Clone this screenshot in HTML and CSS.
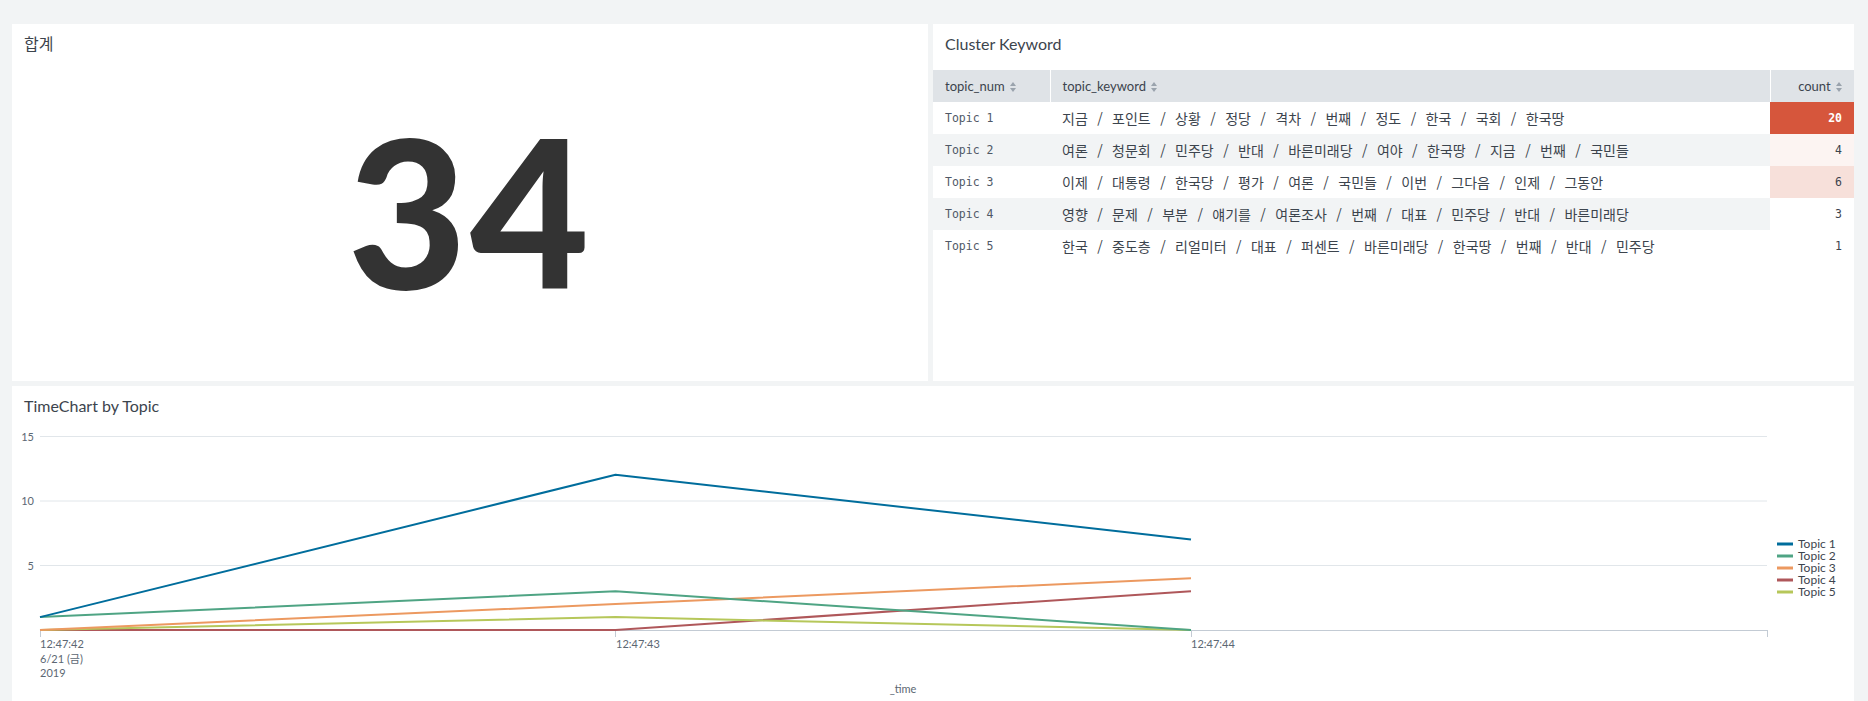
FILE: index.html
```html
<!DOCTYPE html>
<html lang="ko">
<head>
<meta charset="utf-8">
<title>Dashboard</title>
<link rel="stylesheet" href="styles.css">
</head>
<body>
<div class="dashboard">
  <div class="row row-top">
    <section class="panel">
      <h2 class="panel-title">합계</h2>
      <div class="single-value"><span class="sv-number">34</span></div>
    </section>
    <section class="panel">
      <h2 class="panel-title">Cluster Keyword</h2>
      <table class="tbl">
        <colgroup><col class="c-num"><col class="c-kw"><col class="c-count"></colgroup>
        <thead>
          <tr>
            <th>topic_num <svg class="sort" viewBox="0 0 6 10" width="6" height="10"><path d="M3 0 L6 4 L0 4 Z M0 6 L6 6 L3 10 Z"/></svg></th>
            <th>topic_keyword <svg class="sort" viewBox="0 0 6 10" width="6" height="10"><path d="M3 0 L6 4 L0 4 Z M0 6 L6 6 L3 10 Z"/></svg></th>
            <th class="num">count <svg class="sort" viewBox="0 0 6 10" width="6" height="10"><path d="M3 0 L6 4 L0 4 Z M0 6 L6 6 L3 10 Z"/></svg></th>
          </tr>
        </thead>
        <tbody>
          <tr>
            <td class="topic">Topic 1</td>
            <td class="kw">지금 / 포인트 / 상황 / 정당 / 격차 / 번째 / 정도 / 한국 / 국회 / 한국땅</td>
            <td class="num heat-20">20</td>
          </tr>
          <tr class="odd">
            <td class="topic">Topic 2</td>
            <td class="kw">여론 / 청문회 / 민주당 / 반대 / 바른미래당 / 여야 / 한국땅 / 지금 / 번째 / 국민들</td>
            <td class="num heat-4">4</td>
          </tr>
          <tr>
            <td class="topic">Topic 3</td>
            <td class="kw">이제 / 대통령 / 한국당 / 평가 / 여론 / 국민들 / 이번 / 그다음 / 인제 / 그동안</td>
            <td class="num heat-6">6</td>
          </tr>
          <tr class="odd">
            <td class="topic">Topic 4</td>
            <td class="kw">영향 / 문제 / 부분 / 얘기를 / 여론조사 / 번째 / 대표 / 민주당 / 반대 / 바른미래당</td>
            <td class="num heat-3">3</td>
          </tr>
          <tr>
            <td class="topic">Topic 5</td>
            <td class="kw">한국 / 중도층 / 리얼미터 / 대표 / 퍼센트 / 바른미래당 / 한국땅 / 번째 / 반대 / 민주당</td>
            <td class="num heat-1">1</td>
          </tr>
        </tbody>
      </table>
    </section>
  </div>
  <div class="row row-bottom">
    <section class="panel panel-chart">
      <h2 class="panel-title title-chart">TimeChart by Topic</h2>
      <svg class="chart" width="1842" height="290" viewBox="0 0 1842 290">
        <g transform="translate(0,10)">
          <g class="grid">
            <line x1="28" y1="4.5" x2="1755" y2="4.5"/>
            <line x1="28" y1="69" x2="1755" y2="69"/>
            <line x1="28" y1="133.5" x2="1755" y2="133.5"/>
          </g>
          <g class="ylab">
            <text x="22" y="8.5">15</text>
            <text x="22" y="73">10</text>
            <text x="22" y="137.5">5</text>
          </g>
          <g class="axis">
            <line x1="28" y1="198.5" x2="1755" y2="198.5"/>
            <line x1="28.5" y1="198" x2="28.5" y2="205"/>
            <line x1="603.5" y1="198" x2="603.5" y2="205"/>
            <line x1="1179.5" y1="198" x2="1179.5" y2="205"/>
            <line x1="1755.5" y1="198" x2="1755.5" y2="205"/>
          </g>
          <g class="xlab">
            <text x="28" y="216">12:47:42</text>
            <text x="28" y="231">6/21 (금)</text>
            <text x="28" y="245">2019</text>
            <text x="604" y="216">12:47:43</text>
            <text x="1179" y="216">12:47:44</text>
            <text class="xtitle" x="891" y="261">_time</text>
          </g>
          <g class="series" fill="none" stroke-width="2" stroke-linejoin="round">
            <polyline stroke="#af575a" points="28,198 603.5,198 1179,159.2"/>
            <polyline stroke="#b6c75a" points="28,198 603.5,185.1 1179,198"/>
            <polyline stroke="#ec9960" points="28,198 603.5,172.1 1179,146.3"/>
            <polyline stroke="#4fa484" points="28,185.1 603.5,159.2 1179,198"/>
            <polyline stroke="#006d9c" points="28,185.1 603.5,42.8 1179,107.5"/>
          </g>
          <g class="legend">
            <line x1="1765" y1="112" x2="1781" y2="112" stroke="#006d9c"/>
            <text x="1786" y="116">Topic 1</text>
            <line x1="1765" y1="124" x2="1781" y2="124" stroke="#4fa484"/>
            <text x="1786" y="128">Topic 2</text>
            <line x1="1765" y1="136" x2="1781" y2="136" stroke="#ec9960"/>
            <text x="1786" y="140">Topic 3</text>
            <line x1="1765" y1="148" x2="1781" y2="148" stroke="#af575a"/>
            <text x="1786" y="152">Topic 4</text>
            <line x1="1765" y1="160" x2="1781" y2="160" stroke="#b6c75a"/>
            <text x="1786" y="164">Topic 5</text>
          </g>
        </g>
      </svg>
    </section>
  </div>
</div>
</body>
</html>
```
FILE: styles.css
```css
html, body {
  margin: 0;
  padding: 0;
  background: #f2f4f5;
  overflow: hidden;
}
body {
  font-family: Lato, "Noto Sans CJK KR", sans-serif;
  color: #3c444d;
}
.dashboard {
  padding: 24px 14px 0 12px;
}
.row-top {
  display: grid;
  grid-template-columns: 916px 921px;
  gap: 5px;
  height: 357px;
}
.row-bottom {
  margin-top: 5px;
}
.panel {
  background: #fff;
  display: flex;
  flex-direction: column;
  min-width: 0;
}
.panel-chart {
  height: 330px;
  overflow: hidden;
}
.panel-title {
  margin: 0;
  padding: 10px 12px 16px;
  font-size: 16px;
  line-height: 20px;
  font-weight: 400;
  color: #3c444d;
}
.title-chart {
  padding-bottom: 6px;
}
.single-value {
  flex: 1;
  display: flex;
  align-items: center;
  justify-content: center;
  padding-bottom: 32px;
}
.sv-number {
  font-family: Lato, sans-serif;
  font-weight: 900;
  font-size: 206px;
  line-height: 1;
  letter-spacing: 3px;
  color: #333;
}
.tbl {
  width: 100%;
  border-collapse: collapse;
  table-layout: fixed;
  font-size: 13px;
}
.c-num { width: 117px; }
.c-count { width: 84px; }
.tbl th {
  background: #dfe3e7;
  height: 32px;
  padding: 0 12px;
  text-align: left;
  font-weight: 400;
  font-size: 13px;
  color: #3c444d;
  border-left: 1px solid #fff;
  white-space: nowrap;
}
.tbl th:first-child { border-left: none; }
.tbl th.num { text-align: right; }
.sort {
  fill: #9aa3ad;
  vertical-align: -1px;
  margin-left: 2px;
}
.tbl td {
  height: 32px;
  padding: 0 12px;
  white-space: nowrap;
  overflow: hidden;
}
.tbl tr.odd td { background: #f2f4f5; }
.topic {
  font-family: "DejaVu Sans Mono", monospace;
  font-size: 11.5px;
  color: #4f5866;
}
.kw {
  font-family: "Noto Sans CJK KR", sans-serif;
  font-size: 14px;
  word-spacing: 5.5px;
  color: #3c444d;
}
.tbl td.num {
  text-align: right;
  font-family: "DejaVu Sans Mono", monospace;
  font-size: 11.5px;
  color: #3c444d;
}
.tbl tr td.heat-20 { background: #d6563c; color: #fff; font-weight: 700; }
.tbl tr td.heat-4 { background: #fcf4f2; }
.tbl tr td.heat-6 { background: #f7e0da; }
.tbl tr td.heat-3 { background: #fff; }
.tbl tr td.heat-1 { background: #fff; }
.chart {
  display: block;
  flex: none;
  font-family: Lato, "Noto Sans CJK KR", sans-serif;
  font-size: 11px;
}
.grid line {
  stroke: #e1e6ea;
  stroke-width: 1;
}
.axis line {
  stroke: #c3cbd4;
  stroke-width: 1;
}
.ylab text {
  fill: #5c6773;
  text-anchor: end;
}
.xlab text {
  fill: #5c6773;
}
.xlab .xtitle {
  text-anchor: middle;
}
.legend line {
  stroke-width: 3;
}
.legend text {
  fill: #3c444d;
  font-size: 12px;
}
```
